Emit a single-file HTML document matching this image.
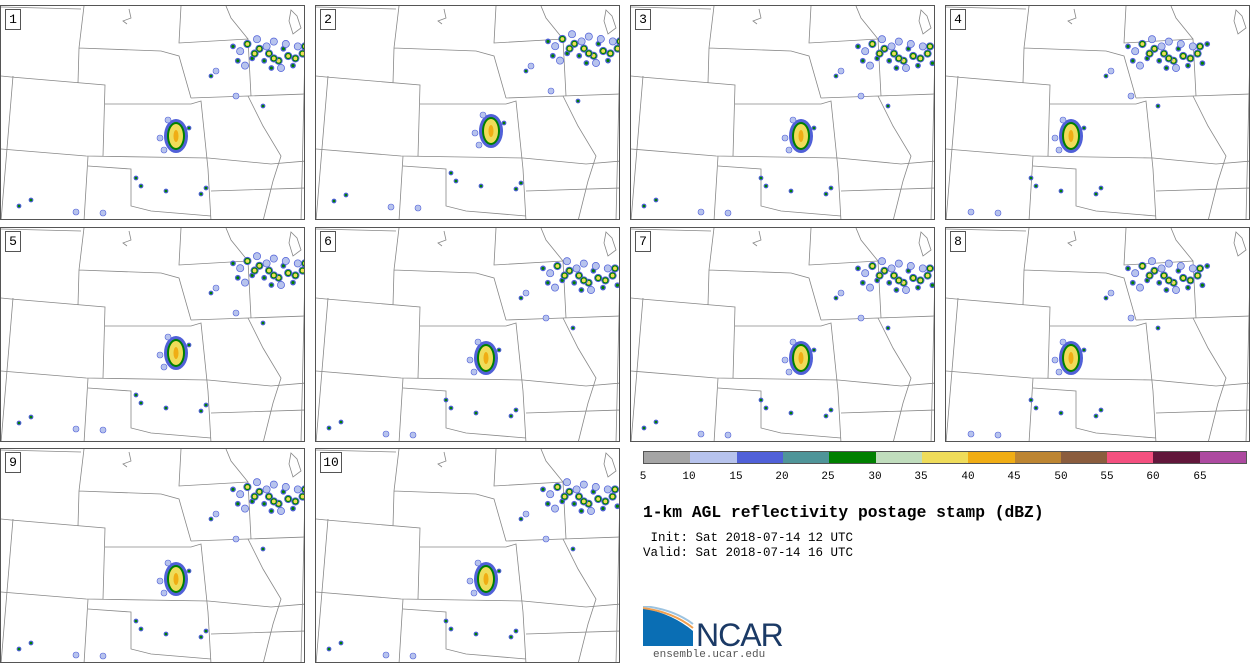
<!DOCTYPE html>
<html><head><meta charset="utf-8"><style>
body{margin:0;width:1260px;height:663px;background:#fff;overflow:hidden;position:relative;font-family:"Liberation Mono","DejaVu Sans Mono",monospace}
.p{position:absolute;width:305px;height:215px;border:1px solid #555;box-sizing:border-box;background:#fff;overflow:hidden}
.p svg{position:absolute;left:0;top:0}
.lb{position:absolute;left:4px;top:3px;width:14px;height:19px;border:1px solid #555;background:#fff;font-size:13px;line-height:19px;text-align:center;color:#000}
.cb{position:absolute;left:643px;top:451px;height:13px;width:604px;display:flex;border:1px solid #555;box-sizing:border-box}
.cb div{flex:1}
.tk{position:absolute;top:471px;font-size:11px;transform:translateX(-50%)}
</style></head><body>
<svg width="0" height="0" style="position:absolute">
<defs>
<g id="m" fill="none" stroke="#888" stroke-width="0.8">
<path d="M0 1L80 3M83 0L78 42L77 77M78 42L160 45L178 50L190 92M180 0L178 37L247 33L250 90M0 70L10 71L104 79L102 150M0 143L85 150L207 152L270 158L305 155M87 150L83 215M104 98L190 98L200 95L207 163L210 215M190 92L247 90L305 88M247 90L262 120L280 150L272 175L262 215M87 160L130 163L130 200L150 205L210 210M210 185L305 182M12 70L0 215M305 0L300 215M225 0L230 12L247 33M128 3L130 12L122 15L126 18"/>
<path d="M290 4L296 10L300 22L292 28L288 15Z"/>
</g>
<g id="d1"><circle r="2.4" fill="#5060d8"/><circle r="1.3" fill="#008000"/></g>
<g id="d2"><circle r="3" fill="#b7c3ed" stroke="#5060d8" stroke-width="0.6"/></g>
<g id="d3"><circle r="3.4" fill="#5060d8"/><circle r="2.6" fill="#008000"/><circle r="1.6" fill="#efdc5a"/></g>
<g id="cl">
<use href="#d1" x="-30" y="-8"/><use href="#d2" x="-24" y="-4"/><use href="#d3" x="-18" y="-10"/><use href="#d1" x="-14" y="2"/>
<use href="#d3" x="-8" y="-6"/><use href="#d1" x="-4" y="4"/><use href="#d3" x="0" y="-2"/><use href="#d2" x="4" y="-12"/>
<use href="#d3" x="8" y="4"/><use href="#d1" x="12" y="-6"/><use href="#d3" x="16" y="0"/><use href="#d1" x="20" y="8"/>
<use href="#d2" x="24" y="-8"/><use href="#d3" x="28" y="-2"/><use href="#d1" x="32" y="6"/><use href="#d2" x="-20" y="8"/>
<use href="#d1" x="2" y="10"/><use href="#d2" x="-10" y="-14"/><use href="#d1" x="36" y="-10"/>
<use href="#d3" x="-12" y="-2"/><use href="#d3" x="4" y="2"/><use href="#d3" x="22" y="2"/><use href="#d2" x="-2" y="-8"/><use href="#d2" x="14" y="-10"/><use href="#d1" x="-26" y="4"/><use href="#d3" x="30" y="-8"/><use href="#d2" x="10" y="10"/>
</g>
<g id="ks">
<ellipse rx="12" ry="17" fill="#5060d8"/><ellipse rx="9" ry="14" fill="#008000"/><ellipse rx="7" ry="12" fill="#efdc5a"/><ellipse rx="2.5" ry="6" fill="#f0ad14"/>
<use href="#d2" x="-16" y="2"/><use href="#d1" x="13" y="-8"/><use href="#d2" x="-12" y="14"/><use href="#d2" x="-8" y="-16"/>
</g>
<g id="st">
<use href="#cl" transform="translate(268,50) scale(1.2)"/>
<use href="#d2" x="215" y="65"/><use href="#d1" x="210" y="70"/><use href="#d2" x="235" y="90"/><use href="#d1" x="262" y="100"/>
<use href="#ks" transform="translate(175,130)"/>
<use href="#d1" x="135" y="172"/><use href="#d1" x="140" y="180"/><use href="#d1" x="165" y="185"/>
<use href="#d1" x="205" y="182"/><use href="#d1" x="200" y="188"/><use href="#d1" x="18" y="200"/><use href="#d1" x="30" y="194"/>
<use href="#d2" x="75" y="206"/><use href="#d2" x="102" y="207"/>
</g>
</defs></svg>

<div class="p" style="left:0;top:5px"><svg width="305" height="215"><use href="#m"/><use href="#st"/></svg><div class="lb">1</div></div>
<div class="p" style="left:315px;top:5px"><svg width="305" height="215"><use href="#m"/><use href="#st" transform="translate(0,-5)"/></svg><div class="lb">2</div></div>
<div class="p" style="left:630px;top:5px"><svg width="305" height="215"><use href="#m"/><use href="#st" transform="translate(-5,0)"/></svg><div class="lb">3</div></div>
<div class="p" style="left:945px;top:5px"><svg width="305" height="215"><use href="#m"/><use href="#st" transform="translate(-50,0)"/></svg><div class="lb">4</div></div>
<div class="p" style="left:0;top:227px"><svg width="305" height="215"><use href="#m"/><use href="#st" transform="translate(0,-5)"/></svg><div class="lb">5</div></div>
<div class="p" style="left:315px;top:227px"><svg width="305" height="215"><use href="#m"/><use href="#st" transform="translate(-5,0)"/></svg><div class="lb">6</div></div>
<div class="p" style="left:630px;top:227px"><svg width="305" height="215"><use href="#m"/><use href="#st" transform="translate(-5,0)"/></svg><div class="lb">7</div></div>
<div class="p" style="left:945px;top:227px"><svg width="305" height="215"><use href="#m"/><use href="#st" transform="translate(-50,0)"/></svg><div class="lb">8</div></div>
<div class="p" style="left:0;top:448px"><svg width="305" height="215"><use href="#m"/><use href="#st"/></svg><div class="lb">9</div></div>
<div class="p" style="left:315px;top:448px"><svg width="305" height="215"><use href="#m"/><use href="#st" transform="translate(-5,0)"/></svg><div class="lb" style="width:20px">10</div></div>

<div class="cb">
<div style="background:#a5a5a5"></div><div style="background:#b7c3ed"></div><div style="background:#5060d8"></div><div style="background:#4f9599"></div><div style="background:#008000"></div><div style="background:#c0ddbd"></div><div style="background:#efdc5a"></div><div style="background:#f0ad14"></div><div style="background:#bd8532"></div><div style="background:#8b5d3e"></div><div style="background:#f4507f"></div><div style="background:#62173b"></div><div style="background:#ad4aa0"></div>
</div>
<div class="tk" style="left:643px">5</div><div class="tk" style="left:689px">10</div><div class="tk" style="left:736px">15</div><div class="tk" style="left:782px">20</div><div class="tk" style="left:828px">25</div><div class="tk" style="left:875px">30</div><div class="tk" style="left:921px">35</div><div class="tk" style="left:968px">40</div><div class="tk" style="left:1014px">45</div><div class="tk" style="left:1061px">50</div><div class="tk" style="left:1107px">55</div><div class="tk" style="left:1153px">60</div><div class="tk" style="left:1200px">65</div>

<div style="position:absolute;left:643px;top:503px;font-size:16.3px;font-weight:bold">1-km AGL reflectivity postage stamp (dBZ)</div>
<div style="position:absolute;left:643px;top:531px;font-size:12.5px;line-height:15px;white-space:pre"> Init: Sat 2018-07-14 12 UTC
Valid: Sat 2018-07-14 16 UTC</div>

<svg style="position:absolute;left:643px;top:606px" width="150" height="42">
<path d="M0 2Q30 8 50 25L50 40L0 40Z" fill="#0a6eb4"/>
<path d="M0 2Q30 6 50 22" fill="none" stroke="#f0a050" stroke-width="2"/>
<path d="M0 0Q30 3 50 18" fill="none" stroke="#9cc3e0" stroke-width="2"/>
<text x="53" y="40" font-family="Liberation Sans,sans-serif" font-size="32" fill="#1b3a66" letter-spacing="-1">NCAR</text>
</svg>
<div style="position:absolute;left:653px;top:649px;font-size:11px;color:#555">ensemble.ucar.edu</div>
</body></html>
